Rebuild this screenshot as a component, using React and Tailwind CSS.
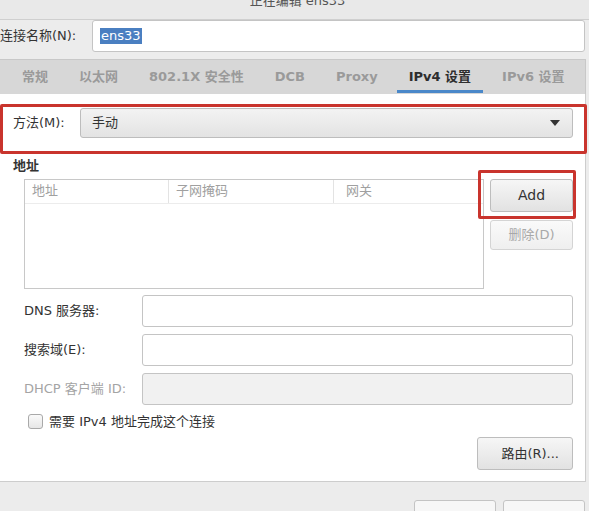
import React from "react";

const font = {
  fontFamily: '"DejaVu Sans", "Noto Sans CJK SC", sans-serif',
};

const tabs = ["常规", "以太网", "802.1X 安全性", "DCB", "Proxy", "IPv4 设置", "IPv6 设置"];

function TextInput({ disabled }) {
  return (
    <div
      className={`flex-1 h-[32px] rounded-[3px] border border-[#c4c4c4] ${
        disabled ? "bg-[#f1f1f1]" : "bg-white"
      }`}
    />
  );
}

function Button({ children, disabled, className = "" }) {
  return (
    <div
      className={`flex items-center justify-center rounded-[3px] border bg-gradient-to-b text-[13px] ${
        disabled
          ? "text-[#a8a8a8] border-[#d4d4d4] from-[#fafafa] to-[#efefef]"
          : "text-[#333] border-[#bdbdbd] from-[#f6f6f6] to-[#e2e2e2]"
      } ${className}`}
    >
      {children}
    </div>
  );
}

export default function App() {
  return (
    <div className="w-[589px] h-[511px] overflow-hidden bg-[#ececec] text-[#2e3436]" style={font}>
      {/* Title bar, cut at the top */}
      <div className="h-[20px] overflow-hidden border-b border-[#cfcfcf] bg-[#e9e9e9] flex justify-center">
        <span className="text-[13px] text-[#555] leading-none -mt-[6px] pl-[6px]">正在编辑 ens33</span>
      </div>

      {/* Connection name */}
      <div className="flex items-center pr-[4px]">
        <span className="w-[92px] text-[13px] text-[#333]">连接名称(N):</span>
        <div className="flex-1 h-[32px] rounded-[3px] border border-[#c4c4c4] bg-white flex items-center pl-[7px]">
          <span className="text-[13px] bg-[#4a7fc1] text-white leading-[16px] px-[1px]">ens33</span>
        </div>
      </div>

      <div className="w-[586px] mt-[7px]">
        {/* Tabs */}
        <div className="h-[35px] bg-[#d7d7d7] border-t border-r border-[#c8c8c8] flex items-stretch pl-[22px]">
          {tabs.map((t) => {
            const active = t === "IPv4 设置";
            return (
              <div
                key={t}
                className={`relative shrink-0 whitespace-nowrap flex items-center text-[13px] font-bold mr-[31px] ${
                  active ? "text-[#2e2e2e]" : "text-[#9a9a9a]"
                }`}
              >
                {t}
                {active && (
                  <div className="absolute left-[-12px] right-[-12px] bottom-[1px] h-[3px] bg-[#4a88c9]" />
                )}
              </div>
            );
          })}
        </div>

        {/* Panel */}
        <div className="h-[388px] bg-white border-r border-b border-[#cdcdcd] pt-[10px]">
          {/* Method (highlighted) */}
          <div className="border-[3px] border-[#c9342d] rounded-[2px] w-[587px] pt-[1px] pb-[13px] pl-[10px] pr-[11px] flex items-center">
            <span className="w-[67px] text-[13px] text-[#333]">方法(M):</span>
            <div className="flex-1 h-[30px] rounded-[3px] border border-[#bdbdbd] bg-gradient-to-b from-[#f3f3f3] to-[#e3e3e3] flex items-center justify-between pl-[11px] pr-[12px]">
              <span className="text-[13px] text-[#333]">手动</span>
              <svg width="10" height="6" viewBox="0 0 10 6">
                <path d="M0 0h10L5 6z" fill="#333" />
              </svg>
            </div>
          </div>

          {/* Addresses */}
          <div className="pl-[13px] mt-[2px] text-[13px] font-bold text-[#333]">地址</div>
          <div className="flex items-start">
            <div className="ml-[24px] mt-[3px] w-[460px] h-[110px] border border-[#c8c8c8]">
              <div className="flex h-[24px] border-b border-[#ececec] text-[13px] text-[#a0a0a0]">
                <div className="w-[144px] pl-[7px] flex items-center border-r border-[#e3e3e3]">地址</div>
                <div className="w-[165px] pl-[7px] flex items-center border-r border-[#e3e3e3]">子网掩码</div>
                <div className="flex-1 pl-[12px] flex items-center">网关</div>
              </div>
            </div>
            <div className="ml-[-6px] flex flex-col">
              <div className="mt-[-6px] border-[3px] border-[#c9342d] rounded-[2px] w-[98px] h-[49px] pl-[9px] pt-[6px]">
                <Button className="w-[83px] h-[33px] text-[14px]">Add</Button>
              </div>
              <Button disabled className="ml-[12px] mt-[1px] w-[83px] h-[30px]">删除(D)</Button>
            </div>
          </div>

          {/* Form rows */}
          <div className="mt-[6px] pl-[24px] pr-[12px] flex flex-col gap-[7px]">
            <div className="flex items-center">
              <span className="w-[118px] text-[13px] text-[#333]">DNS 服务器:</span>
              <TextInput />
            </div>
            <div className="flex items-center">
              <span className="w-[118px] text-[13px] text-[#333]">搜索域(E):</span>
              <TextInput />
            </div>
            <div className="flex items-center">
              <span className="w-[118px] text-[13px] text-[#a4a4a4]">DHCP 客户端 ID:</span>
              <TextInput disabled />
            </div>
          </div>

          <div className="mt-[7px] pl-[28px] flex items-center">
            <div className="w-[15px] h-[15px] rounded-[3px] border border-[#a9a9a9] bg-gradient-to-b from-[#fafafa] to-[#e6e6e6]" />
            <span className="ml-[6px] text-[13px] text-[#333]">需要 IPv4 地址完成这个连接</span>
          </div>

          <div className="flex justify-end pr-[12px] mt-[6px]">
            <Button className="w-[96px] h-[33px] justify-end pr-[13px]">路由(R)...</Button>
          </div>
        </div>
      </div>

      {/* Bottom buttons, cut off */}
      <div className="flex justify-end gap-[7px] pr-[4px] mt-[18px]">
        <div className="w-[82px] h-[30px] rounded-[3px] border border-[#c4c4c4] bg-[#f7f7f7]" />
        <div className="w-[82px] h-[30px] rounded-[3px] border border-[#c4c4c4] bg-[#f7f7f7]" />
      </div>
    </div>
  );
}
